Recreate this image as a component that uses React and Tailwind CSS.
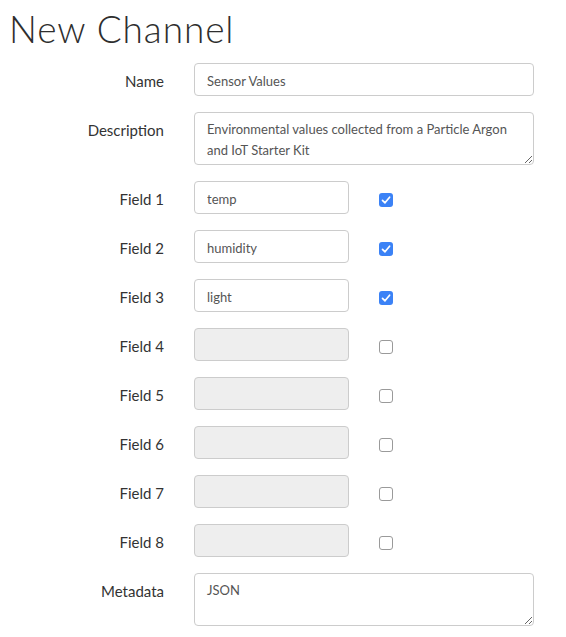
import React from "react";

const fields = [
  { n: 1, value: "temp", on: true },
  { n: 2, value: "humidity", on: true },
  { n: 3, value: "light", on: true },
  { n: 4, value: "", on: false },
  { n: 5, value: "", on: false },
  { n: 6, value: "", on: false },
  { n: 7, value: "", on: false },
  { n: 8, value: "", on: false },
];

function Check({ on }) {
  if (on) {
    return (
      <span className="mt-[4px] flex h-[14px] w-[14px] items-center justify-center rounded-[3px] bg-[#3b82f6]">
        <svg viewBox="0 0 14 14" className="h-[14px] w-[14px]">
          <path d="M3.5 7.3 L6 9.8 L10.6 4.2" fill="none" stroke="white" strokeWidth="1.7" strokeLinecap="round" strokeLinejoin="round" />
        </svg>
      </span>
    );
  }
  return <span className="mt-[4px] block h-[14px] w-[14px] rounded-[3px] border border-[#9a9a9a] bg-white" />;
}

function Label({ children }) {
  return <div className="pt-[8px] text-right text-[15px] leading-[20px] text-[#333]">{children}</div>;
}

export default function App() {
  const inputCls = "h-[33px] rounded-[4px] border border-[#ccc] px-3 pt-[2px] text-[13px] text-[#555] outline-none";
  return (
    <div className="min-h-[637px] bg-white pb-3 font-['Lato',sans-serif]">
      <h1 className="pl-[9px] pt-[7px] text-[37px] font-light leading-[44px] tracking-[0.9px] text-[#2e2e2e]">New Channel</h1>
      <div className="mt-[12px] grid grid-cols-[164px_1fr] gap-x-[30px] gap-y-4 pr-[32px]">
        <Label>Name</Label>
        <input readOnly value="Sensor Values" className={inputCls + " w-full bg-white"} />

        <Label>Description</Label>
        <textarea
          readOnly
          value="Environmental values collected from a Particle Argon and IoT Starter Kit"
          className="block h-[53px] w-full rounded-[4px] border border-[#ccc] px-3 pt-[6px] text-[13px] leading-[21px] text-[#555] outline-none"
        />

        {fields.map((f) => (
          <React.Fragment key={f.n}>
            <Label>Field {f.n}</Label>
            <div className="flex items-center gap-[30px]">
              <input
                readOnly
                value={f.value}
                disabled={!f.on}
                className={inputCls + " w-[155px] " + (f.on ? "bg-white" : "bg-[#eee]")}
              />
              <Check on={f.on} />
            </div>
          </React.Fragment>
        ))}

        <Label>Metadata</Label>
        <textarea
          readOnly
          value="JSON"
          className="block h-[53px] w-full rounded-[4px] border border-[#ccc] px-3 pt-[6px] text-[13px] leading-[21px] text-[#555] outline-none"
        />
      </div>
    </div>
  );
}
